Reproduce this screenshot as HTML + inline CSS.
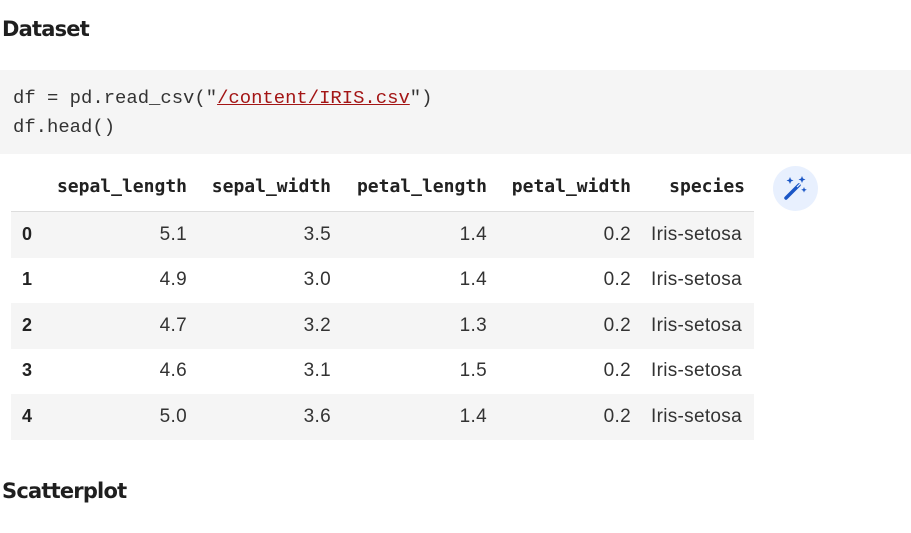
<!DOCTYPE html>
<html><head><style>
body{margin:0;width:911px;height:533px;background:#fff;position:relative;overflow:hidden;font-family:"Liberation Sans",sans-serif;color:#212121}
.h{position:absolute;left:2px;font-size:21px;font-weight:bold;font-family:"DejaVu Sans","Liberation Sans",sans-serif;letter-spacing:-0.8px;color:#1f1f1f}
.code{position:absolute;left:0;top:70px;width:911px;height:84px;background:#f5f5f5}
.cl{position:absolute;left:13px;font-family:"Liberation Mono",monospace;font-size:18.9px;color:#333}
.s{color:#a31515;text-decoration:underline;text-decoration-color:#a31515}
.band{position:absolute;left:11px;width:743px;height:46px;background:#f5f5f5}
.th{position:absolute;top:176px;font-family:"DejaVu Sans Mono","Liberation Mono",monospace;font-weight:bold;font-size:18px;color:#212121}
.c{position:absolute;font-size:19px;color:#333;letter-spacing:0.3px}
.i{position:absolute;left:22px;font-size:18px;font-weight:bold;color:#222}
</style></head><body>
<div class="h" style="top:17px">Dataset</div>
<div class="code"></div>
<div class="cl" style="top:87px">df = pd.read_csv("<span class="s">/content/IRIS.csv</span>")</div>
<div class="cl" style="top:116px">df.head()</div>
<div class="th" style="right:724px">sepal_length</div>
<div class="th" style="right:580px">sepal_width</div>
<div class="th" style="right:424px">petal_length</div>
<div class="th" style="right:280px">petal_width</div>
<div class="th" style="right:166px">species</div>
<div style="position:absolute;left:11px;top:211px;width:743px;height:1px;background:#ddd"></div>
<div style="position:absolute;left:773px;top:166px;width:45px;height:45px;border-radius:50%;background:#e8f0fe"></div>
<svg style="position:absolute;left:780px;top:173px" width="30" height="30" viewBox="0 0 30 30"><path d="M6 25 L19 12" stroke="#1a56c6" stroke-width="3.5" stroke-linecap="round"/><path d="M17 14 L21 10" stroke="#e8f0fe" stroke-width="1.2"/><path d="M10 4 l1 2.5 2.5 1 -2.5 1 -1 2.5 -1 -2.5 -2.5 -1 2.5 -1z M22 3 l1 2.5 2.5 1 -2.5 1 -1 2.5 -1 -2.5 -2.5 -1 2.5 -1z M24 14 l0.8 2 2 0.8 -2 0.8 -0.8 2 -0.8 -2 -2 -0.8 2 -0.8z" fill="#1a56c6"/></svg>
<div class="band" style="top:212px"></div>
<div class="band" style="top:303px"></div>
<div class="band" style="top:394px"></div>
<div class="i" style="top:224px">0</div><div class="c" style="right:724px;top:224px">5.1</div><div class="c" style="right:580px;top:224px">3.5</div><div class="c" style="right:424px;top:224px">1.4</div><div class="c" style="right:280px;top:224px">0.2</div><div class="c" style="left:651px;top:224px">Iris-setosa</div>
<div class="i" style="top:269px">1</div><div class="c" style="right:724px;top:269px">4.9</div><div class="c" style="right:580px;top:269px">3.0</div><div class="c" style="right:424px;top:269px">1.4</div><div class="c" style="right:280px;top:269px">0.2</div><div class="c" style="left:651px;top:269px">Iris-setosa</div>
<div class="i" style="top:315px">2</div><div class="c" style="right:724px;top:315px">4.7</div><div class="c" style="right:580px;top:315px">3.2</div><div class="c" style="right:424px;top:315px">1.3</div><div class="c" style="right:280px;top:315px">0.2</div><div class="c" style="left:651px;top:315px">Iris-setosa</div>
<div class="i" style="top:360px">3</div><div class="c" style="right:724px;top:360px">4.6</div><div class="c" style="right:580px;top:360px">3.1</div><div class="c" style="right:424px;top:360px">1.5</div><div class="c" style="right:280px;top:360px">0.2</div><div class="c" style="left:651px;top:360px">Iris-setosa</div>
<div class="i" style="top:406px">4</div><div class="c" style="right:724px;top:406px">5.0</div><div class="c" style="right:580px;top:406px">3.6</div><div class="c" style="right:424px;top:406px">1.4</div><div class="c" style="right:280px;top:406px">0.2</div><div class="c" style="left:651px;top:406px">Iris-setosa</div>
<div class="h" style="top:479px">Scatterplot</div>
</body></html>
